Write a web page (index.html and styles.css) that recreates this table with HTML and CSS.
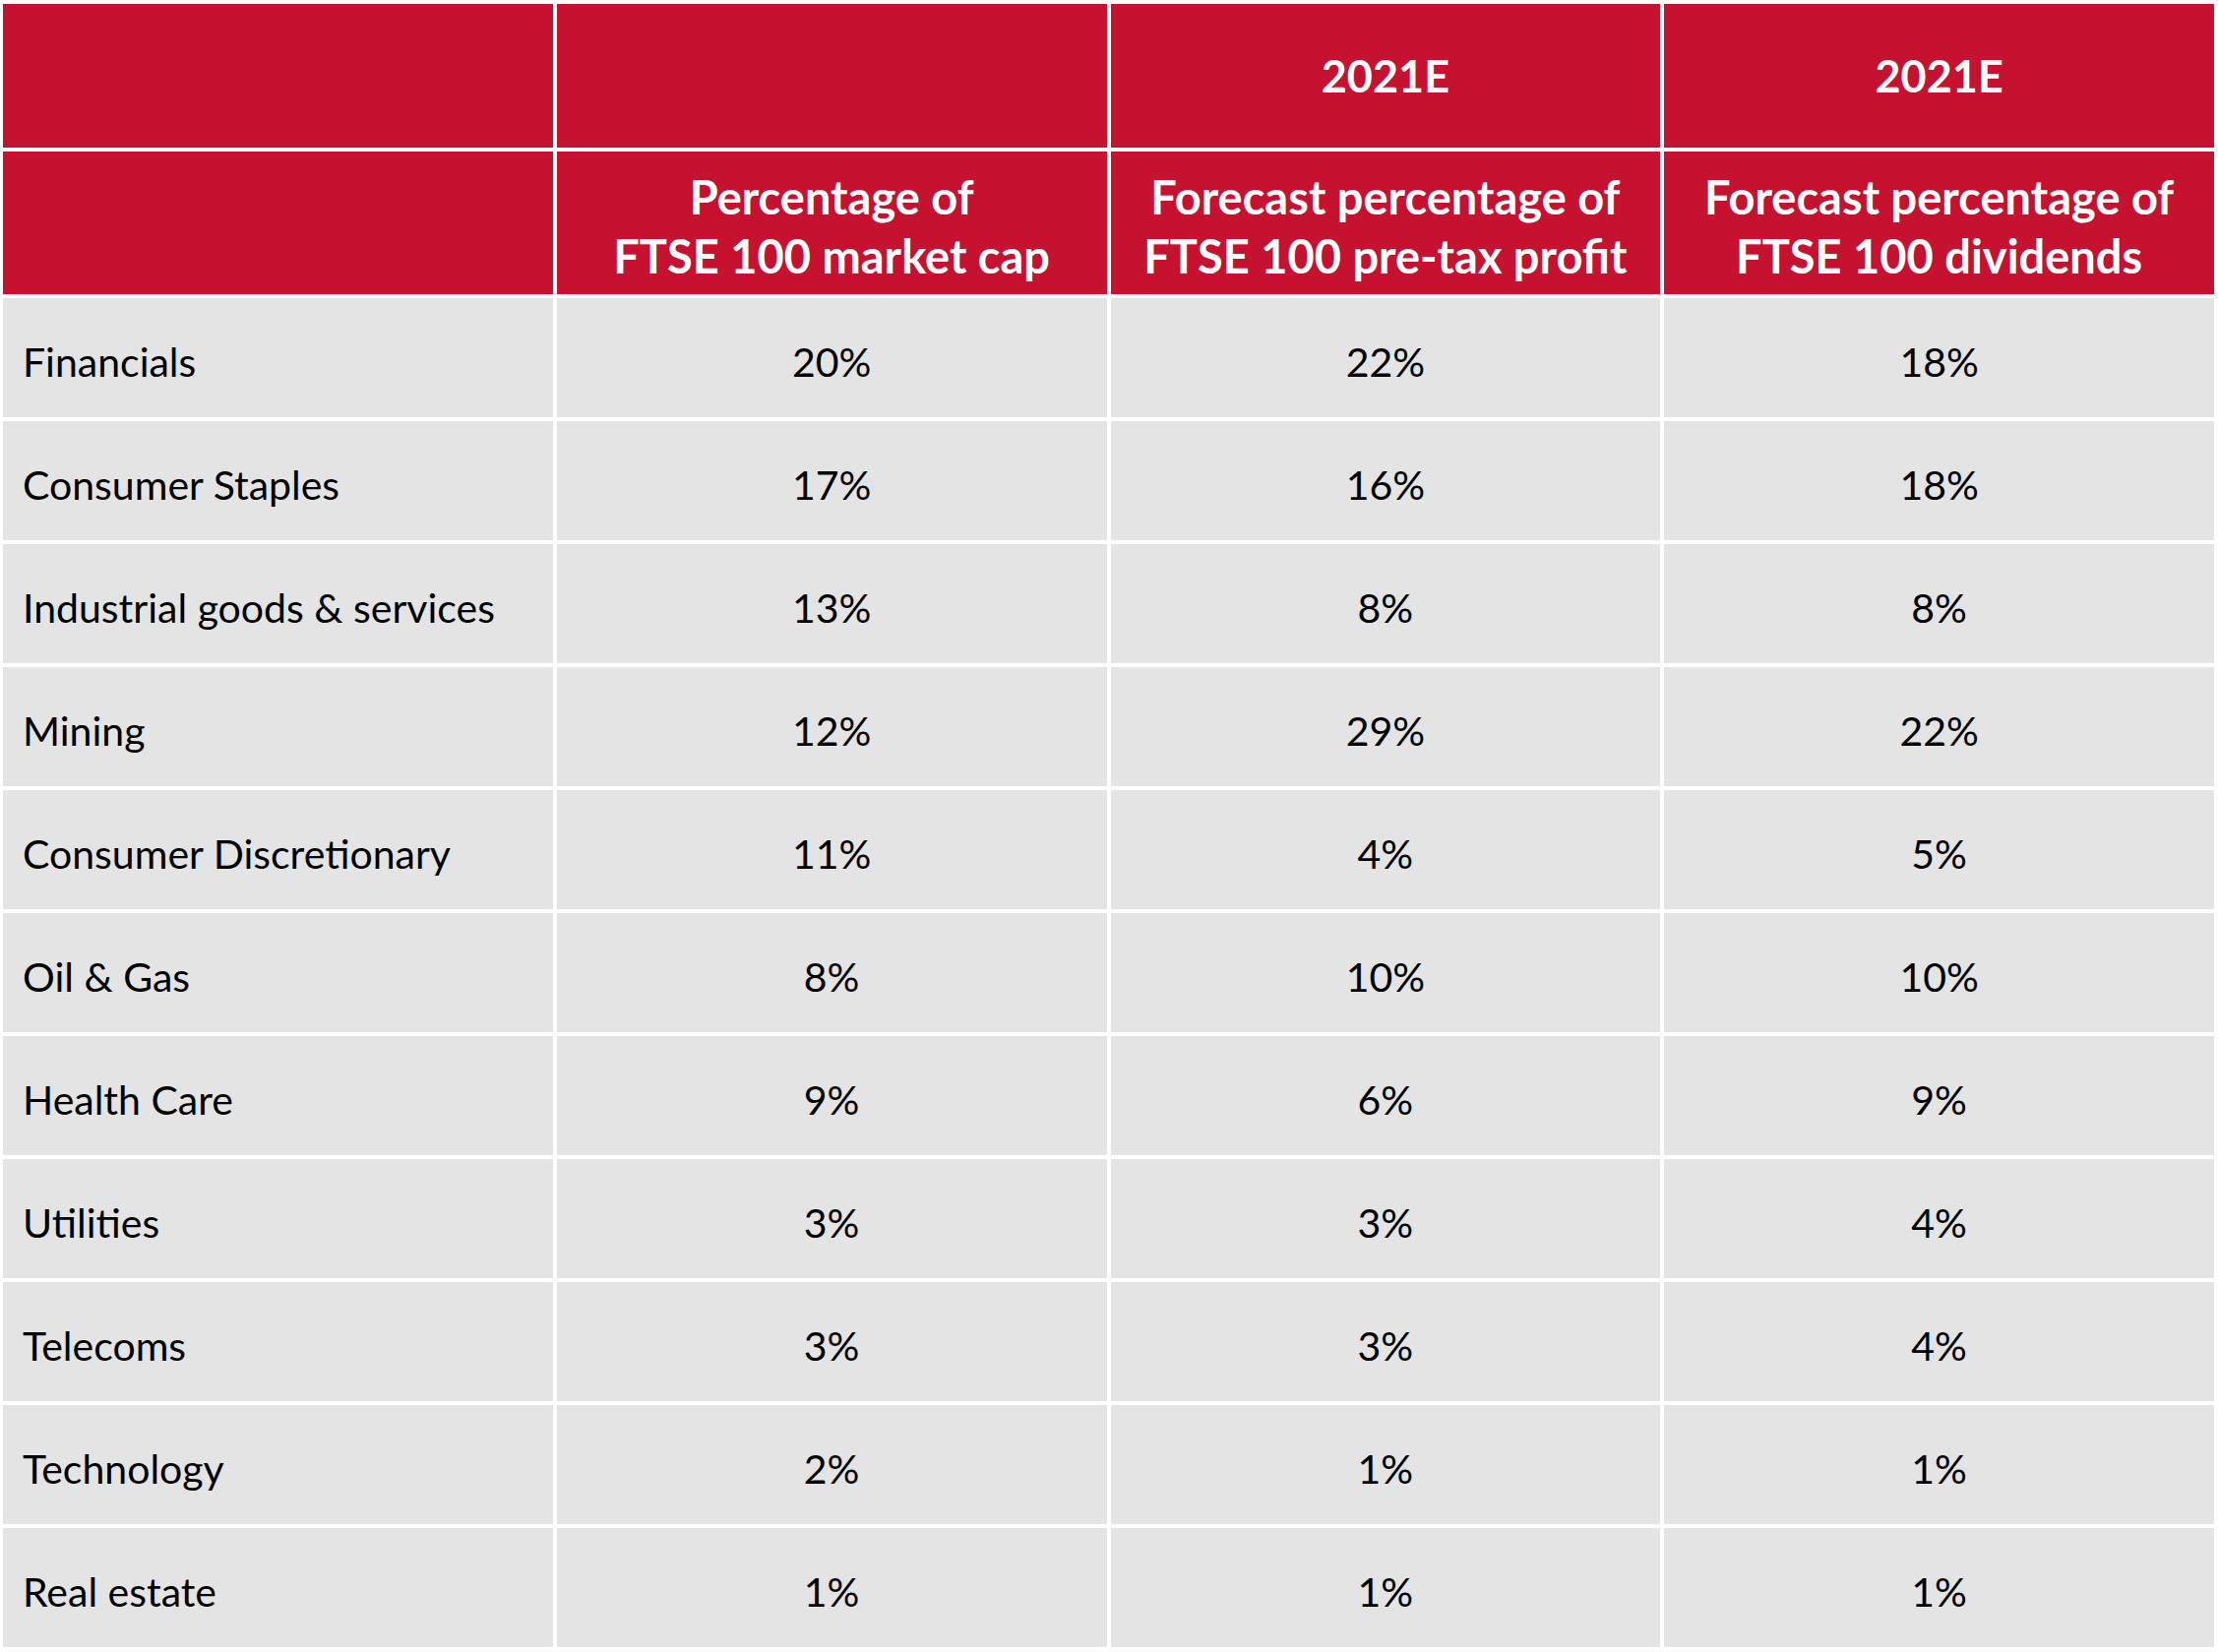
FILE: index.html
```html
<!DOCTYPE html>
<html lang="en">
<head>
<meta charset="utf-8">
<title>FTSE 100 sector breakdown</title>
<link rel="stylesheet" href="styles.css">
</head>
<body>
<div class="sheet">
  <div class="grid">
    <div class="cell head top"></div>
    <div class="cell head top"></div>
    <div class="cell head top">2021E</div>
    <div class="cell head top">2021E</div>

    <div class="cell head sub"></div>
    <div class="cell head sub">Percentage of<br>FTSE 100 market cap</div>
    <div class="cell head sub">Forecast percentage of<br>FTSE 100 pre-tax profit</div>
    <div class="cell head sub">Forecast percentage of<br>FTSE 100 dividends</div>

    <div class="cell label">Financials</div><div class="cell num">20%</div><div class="cell num">22%</div><div class="cell num">18%</div>
    <div class="cell label">Consumer Staples</div><div class="cell num">17%</div><div class="cell num">16%</div><div class="cell num">18%</div>
    <div class="cell label">Industrial goods &amp; services</div><div class="cell num">13%</div><div class="cell num">8%</div><div class="cell num">8%</div>
    <div class="cell label">Mining</div><div class="cell num">12%</div><div class="cell num">29%</div><div class="cell num">22%</div>
    <div class="cell label">Consumer Discretionary</div><div class="cell num">11%</div><div class="cell num">4%</div><div class="cell num">5%</div>
    <div class="cell label">Oil &amp; Gas</div><div class="cell num">8%</div><div class="cell num">10%</div><div class="cell num">10%</div>
    <div class="cell label">Health Care</div><div class="cell num">9%</div><div class="cell num">6%</div><div class="cell num">9%</div>
    <div class="cell label">Utilities</div><div class="cell num">3%</div><div class="cell num">3%</div><div class="cell num">4%</div>
    <div class="cell label">Telecoms</div><div class="cell num">3%</div><div class="cell num">3%</div><div class="cell num">4%</div>
    <div class="cell label">Technology</div><div class="cell num">2%</div><div class="cell num">1%</div><div class="cell num">1%</div>
    <div class="cell label">Real estate</div><div class="cell num">1%</div><div class="cell num">1%</div><div class="cell num">1%</div>
  </div>
</div>
</body>
</html>
```
FILE: styles.css
```css
html, body {
  margin: 0;
  padding: 0;
  background: #ffffff;
}

.sheet {
  padding: 4px 4px 0 3px;
  font-family: Lato, "Noto Sans", sans-serif;
}

.grid {
  display: grid;
  grid-template-columns: repeat(4, 1fr);
  grid-template-rows: 146px 145px repeat(11, 121px);
  gap: 4px;
}

.cell {
  display: flex;
  align-items: center;
  box-sizing: border-box;
}

.head {
  background: #c41230;
  color: #ffffff;
  font-weight: 700;
  font-size: 47px;
  line-height: 60px;
  justify-content: center;
  text-align: center;
}

.top {
  font-size: 45px;
}

.sub {
  padding-top: 6px;
}

.label,
.num {
  background: #e4e4e4;
  color: #000000;
  font-size: 41px;
  line-height: 50px;
  padding-top: 8px;
}

.label {
  padding-left: 20px;
}

.num {
  justify-content: center;
}
```
